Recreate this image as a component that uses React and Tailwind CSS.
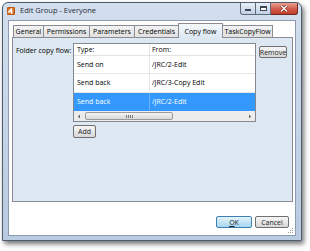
import React from "react";

const tabs = [
  { label: "General", w: "w-[31px]" },
  { label: "Permissions", w: "w-[47px]" },
  { label: "Parameters", w: "w-[46px]" },
  { label: "Credentials", w: "w-[45px]" },
  { label: "Copy flow", w: "w-[45px]", active: true },
  { label: "TaskCopyFlow", w: "w-[51px]" },
];

const rows = [
  { type: "Send on", from: "/JRC/2-Edit" },
  { type: "Send back", from: "/JRC/3-Copy Edit" },
  { type: "Send back", from: "/JRC/2-Edit", selected: true },
];

function Button({ children, className = "", primary }) {
  return (
    <div
      className={
        "flex items-center justify-center rounded-[2px] border text-[7px] leading-none text-[#1e1e1e] " +
        (primary
          ? "border-[#3c7fb1] bg-gradient-to-b from-[#e5f4fc] via-[#c4e5f6] to-[#a8d6f0] "
          : "border-[#707070] bg-gradient-to-b from-[#f6f6f6] via-[#e8e8e8] to-[#d6d6d6] ") +
        className
      }
    >
      {children}
    </div>
  );
}

function TitleButtons() {
  return (
    <div className="flex h-[12px] self-start">
      <div className="flex w-[16px] items-center justify-center rounded-bl-[3px] border border-t-0 border-[#5e6b7d] bg-gradient-to-b from-[#e6eef7] to-[#c2d1e4]">
        <div className="mt-[3px] h-[2px] w-[6px] border border-[#3c4654] bg-white" />
      </div>
      <div className="flex w-[15px] items-center justify-center border border-l-0 border-t-0 border-[#5e6b7d] bg-gradient-to-b from-[#e6eef7] to-[#c2d1e4]">
        <div className="h-[5px] w-[7px] border border-t-2 border-[#3c4654] bg-white" />
      </div>
      <div className="flex w-[27px] items-center justify-center rounded-br-[3px] border border-l-0 border-t-0 border-[#6b2a22] bg-gradient-to-b from-[#e8a193] via-[#d2604f] to-[#c23a28]">
        <svg width="8" height="7" viewBox="0 0 8 7">
          <path d="M1 0.5 L7 6.5 M7 0.5 L1 6.5" stroke="#5a1a12" strokeWidth="2.4" />
          <path d="M1 0.5 L7 6.5 M7 0.5 L1 6.5" stroke="#ffffff" strokeWidth="1.4" />
        </svg>
      </div>
    </div>
  );
}

export default function App() {
  return (
    <div className="h-[251px] w-[310px] overflow-hidden bg-white pl-[2px] pt-[2px] font-['Open_Sans','Noto_Sans',sans-serif]">
      <div className="flex h-[239px] w-[300px] flex-col rounded-t-[6px] border border-[#4f5c6d] bg-gradient-to-b from-[#d3dfee] via-[#c5d4e7] to-[#b9cbe1] shadow-[2px_3px_5px_rgba(0,0,0,0.55)]">
        <div className="flex h-[18px] items-start pr-[3px]">
          <div className="flex flex-1 items-center pl-[4px] pt-[4px]">
            <svg width="8" height="8" viewBox="0 0 8 8">
              <rect x="0" y="0" width="8" height="8" rx="1" fill="#d9711f" />
              <rect x="0.5" y="0.5" width="7" height="7" rx="1" fill="none" stroke="#a24d10" strokeWidth="0.6" />
              <path d="M4.6 1.4 L1.6 5 L5.8 5 M4.6 1.4 L4.6 7" stroke="#ffffff" strokeWidth="1.2" fill="none" />
            </svg>
            <span className="ml-[5px] text-[7.5px] leading-none text-[#1f2a36]">
              Edit Group - Everyone
            </span>
          </div>
          <TitleButtons />
        </div>

        <div className="mx-[5px] mb-[4px] flex flex-1 flex-col border border-[#8d9cb0] bg-white">
          <div className="flex flex-col px-[3px] pt-[1px]">
            <div className="relative z-10 flex h-[15px] items-end pl-[1px]">
              {tabs.map((t) =>
                t.active ? (
                  <div
                    key={t.label}
                    className={`${t.w} -ml-px -mb-px flex h-[15px] items-center justify-center border border-b-0 border-[#898c95] bg-gradient-to-b from-[#f4f8fc] to-[#dde8f3] text-[7px] leading-none text-black`}
                  >
                    {t.label}
                  </div>
                ) : (
                  <div
                    key={t.label}
                    className={`${t.w} -ml-px flex h-[12px] items-center justify-center border border-b-0 border-[#898c95] bg-gradient-to-b from-[#f3f3f3] to-[#e1e1e1] text-[7px] leading-none text-black first:ml-0`}
                  >
                    {t.label}
                  </div>
                )
              )}
            </div>

            <div className="flex h-[165px] w-[281px] items-start border border-[#898c95] bg-[#dde8f3] pl-[3px] pt-[5px]">
              <div className="w-[57px] pt-[4px] text-[7px] leading-none text-black">
                Folder copy flow:
              </div>
              <div className="flex flex-col">
                <div className="flex h-[79px] w-[183px] flex-col border border-[#828790] bg-white text-[7px] leading-none">
                  <div className="flex h-[12px] items-center border-b border-[#e3e3e3]">
                    <div className="flex h-full w-[76px] items-center border-r border-[#e3e3e3] pl-[3px]">
                      Type:
                    </div>
                    <div className="pl-[2px]">From:</div>
                  </div>
                  {rows.map((r, i) => (
                    <div
                      key={i}
                      className={
                        "flex h-[18.5px] items-center border-b " +
                        (r.selected
                          ? "border-[#3399ff] bg-[#3399ff] text-white"
                          : "border-[#e6e6e6] text-black")
                      }
                    >
                      <div
                        className={
                          "flex h-full w-[76px] items-center border-r pl-[3px] " +
                          (r.selected ? "border-[#6bb3ff]" : "border-[#e6e6e6]")
                        }
                      >
                        {r.type}
                      </div>
                      <div className="pl-[2px]">{r.from}</div>
                    </div>
                  ))}
                  <div className="mt-auto flex h-[10px] items-center bg-[#ececec]">
                    <div className="flex w-[10px] items-center justify-center">
                      <svg width="4" height="5" viewBox="0 0 4 5">
                        <path d="M3 0.5 L1 2.5 L3 4.5 Z" fill="#606060" />
                      </svg>
                    </div>
                    <div className="ml-[1px] flex h-[8px] w-[88px] items-center justify-center rounded-[2px] border border-[#9a9a9a] bg-gradient-to-b from-[#f4f4f4] to-[#d8d8d8]">
                      <div className="flex gap-[1px]">
                        <div className="h-[3px] w-px bg-[#777]" />
                        <div className="h-[3px] w-px bg-[#777]" />
                        <div className="h-[3px] w-px bg-[#777]" />
                        <div className="h-[3px] w-px bg-[#777]" />
                      </div>
                    </div>
                    <div className="flex-1" />
                    <div className="flex w-[10px] items-center justify-center">
                      <svg width="4" height="5" viewBox="0 0 4 5">
                        <path d="M1 0.5 L3 2.5 L1 4.5 Z" fill="#606060" />
                      </svg>
                    </div>
                  </div>
                </div>
                <Button className="mt-[3px] h-[13px] w-[23px]">Add</Button>
              </div>
              <Button className="ml-[3px] mt-[3px] h-[12px] w-[28px]">Remove</Button>
            </div>
          </div>

          <div className="mt-[14px] flex justify-end gap-[3px] pr-[6px]">
            <Button primary className="h-[12px] w-[36px]">
              <span className="underline">O</span>K
            </Button>
            <Button className="h-[12px] w-[34px]">Cancel</Button>
          </div>
          <div className="mt-auto flex justify-end pb-[1px] pr-[1px]">
            <svg width="6" height="6" viewBox="0 0 6 6">
              <rect x="4" y="0" width="1" height="1" fill="#a0a0a0" />
              <rect x="2" y="2" width="1" height="1" fill="#a0a0a0" />
              <rect x="4" y="2" width="1" height="1" fill="#a0a0a0" />
              <rect x="0" y="4" width="1" height="1" fill="#a0a0a0" />
              <rect x="2" y="4" width="1" height="1" fill="#a0a0a0" />
              <rect x="4" y="4" width="1" height="1" fill="#a0a0a0" />
            </svg>
          </div>
        </div>
      </div>
    </div>
  );
}
